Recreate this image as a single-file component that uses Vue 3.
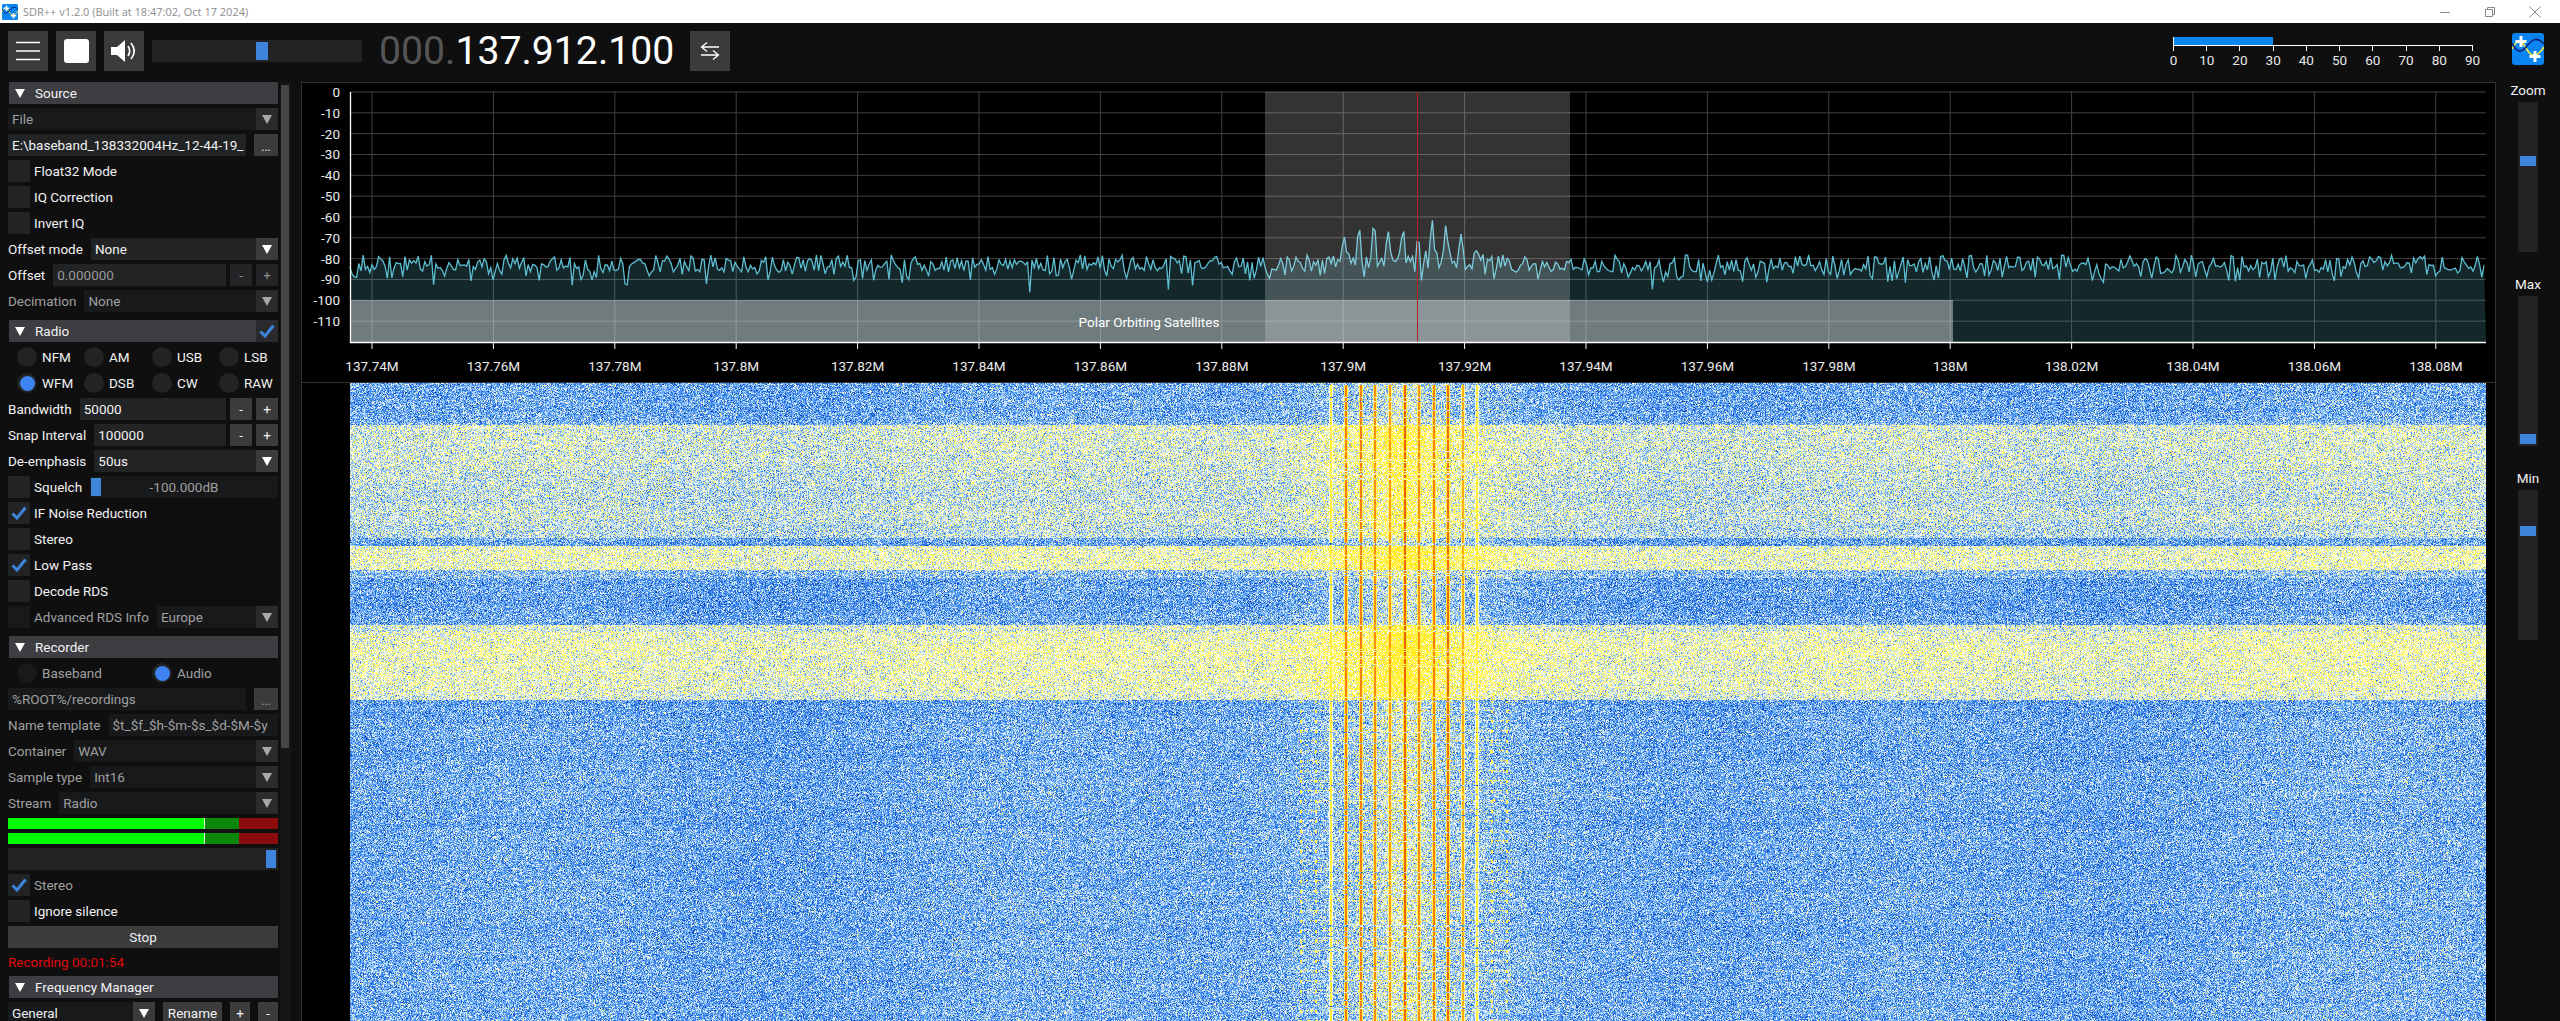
<script setup>
import { ref, onMounted } from 'vue';

const waterfall = ref(null);

function rng(seed) {
  let s = seed;
  return () => {
    s = (s * 1664525 + 1013904223) >>> 0;
    return s / 4294967296;
  };
}

// FFT grid, page coordinates
const dbLines = Array.from({ length: 12 }, (_, i) => ({ y: 92 + i * 20.83, label: i ? '-' + i * 10 : '0' }));
const freqLabels = ['137.74M', '137.76M', '137.78M', '137.8M', '137.82M', '137.84M', '137.86M', '137.88M', '137.9M',
  '137.92M', '137.94M', '137.96M', '137.98M', '138M', '138.02M', '138.04M', '138.06M', '138.08M'];
const freqLines = freqLabels.map((label, i) => ({ x: 372 + i * 121.4, label }));

const peaks = [[1344, 234], [1359, 221], [1374, 215], [1388, 228], [1403, 223], [1418, 235], [1432, 215], [1446, 221], [1461, 234], [1476, 250]];

function buildTrace() {
  const r = rng(77);
  const pts = [];
  for (let x = 350; x <= 2486; x += 2.2) {
    let y = 255 + r() * 17;
    if (r() < 0.35) y += r() * 14;
    if (r() < 0.04) y += r() * 18;
    y -= 5 * Math.exp(-((x - 1410) ** 2) / 5000);
    for (const [px, py] of peaks) {
      const d = Math.abs(x - px);
      if (d < 3) y = Math.min(y, py + d * (255 - py) / 3);
    }
    pts.push(x.toFixed(1) + ' ' + y.toFixed(1));
  }
  return pts;
}
const tracePts = buildTrace();
const tracePath = 'M' + tracePts.join('L');
const fillPath = 'M350 342L' + tracePts.join('L') + 'L2486 342Z';

const bands = [
  [383, 412, 0.36], [412, 425, 0.39], [425, 470, 0.54], [470, 525, 0.51], [525, 538, 0.5], [538, 546, 0.36],
  [546, 570, 0.6], [570, 578, 0.43], [578, 625, 0.35], [625, 632, 0.56], [632, 690, 0.6], [690, 700, 0.56], [700, 1022, 0.37]
];

const stops = [
  [0, 0, 50, 160], [0.2, 36, 106, 224], [0.36, 96, 166, 244], [0.5, 196, 226, 252], [0.57, 255, 255, 255],
  [0.66, 255, 255, 150], [0.78, 255, 232, 20], [0.88, 255, 160, 10], [1, 232, 70, 0]
];

function colorAt(l) {
  if (l <= 0) return stops[0];
  for (let i = 1; i < stops.length; i++) {
    if (l <= stops[i][0]) {
      const a = stops[i - 1];
      const b = stops[i];
      const t = (l - a[0]) / (b[0] - a[0]);
      return [0, a[1] + (b[1] - a[1]) * t, a[2] + (b[2] - a[2]) * t, a[3] + (b[3] - a[3]) * t];
    }
  }
  return stops[stops.length - 1];
}

// page x of each carrier line with the level it reaches
const carriers = [
  [1330, 0.72], [1345, 0.9], [1360, 0.9], [1374, 0.88], [1389, 0.86], [1404, 0.94],
  [1418, 0.88], [1433, 0.9], [1447, 0.92], [1462, 0.84], [1476, 0.72]
];
const dotted = [1300, 1315, 1491, 1506];

function drawWaterfall(canvas) {
  const w = canvas.width;
  const h = canvas.height;
  const ctx = canvas.getContext('2d');
  const img = ctx.createImageData(w, h);
  const r = rng(4242);
  const gauss = () => (r() + r() + r() - 1.5) * 0.22;

  const lineLevel = new Float32Array(w);
  const lineEdge = new Float32Array(w);
  const dotCol = new Uint8Array(w);
  const glow = new Float32Array(w);
  const core = new Float32Array(w);
  const drift = new Float32Array(w);
  for (let x = 0; x < w; x++) {
    const px = x + 350;
    glow[x] = 0.09 * Math.exp(-((px - 1400) ** 2) / (2 * 60 * 60));
    core[x] = 0.07 * Math.exp(-((px - 1403) ** 2) / (2 * 16 * 16));
    drift[x] = 0.012 * Math.sin(px / 71) + 0.012 * Math.sin(px / 193 + 1);
    for (const [cx, lvl] of carriers) {
      if (px === cx || px === cx + 1) lineLevel[x] = lvl;
      if (px === cx - 1 || px === cx + 2) lineEdge[x] = lvl - 0.17;
    }
    if (dotted.includes(px) || dotted.includes(px - 1)) dotCol[x] = 1;
  }

  let b = 0;
  let walk = 0;
  for (let y = 0; y < h; y++) {
    const py = y + 383;
    while (py >= bands[b][1]) b++;
    const base = bands[b][2];
    const lower = py > 700;
    walk = walk * 0.8 + (r() - 0.5) * 0.02;
    const rowOn = r() > 0.12;
    const gridRow = lower && py % 10 < 1;
    for (let x = 0; x < w; x++) {
      const px = x + 350;
      let l = base + walk + drift[x] + gauss();
      const s = r();
      if (s < 0.11) l += 0.15;
      else if (s < 0.19) l -= 0.16;
      l = Math.min(Math.min(l, 0.7) + glow[x] + core[x], 0.77);
      if (gridRow && px > 1300 && px < 1510 && r() > 0.45) l += 0.18;
      if (lineLevel[x] && rowOn) l = Math.max(l, lineLevel[x] + r() * 0.05);
      else if (lineEdge[x] && rowOn) l = Math.max(l, lineEdge[x]);
      if (dotCol[x] && lower && py % 10 < 3) l = Math.max(l, 0.72);
      const c = colorAt(l);
      const i = (y * w + x) * 4;
      img.data[i] = c[1];
      img.data[i + 1] = c[2];
      img.data[i + 2] = c[3];
      img.data[i + 3] = 255;
    }
  }
  ctx.putImageData(img, 0, 0);
}

onMounted(() => {
  drawWaterfall(waterfall.value);
});

const modes = ['NFM', 'AM', 'USB', 'LSB', 'WFM', 'DSB', 'CW', 'RAW'];
const meterTicks = [0, 10, 20, 30, 40, 50, 60, 70, 80, 90];
const sideSliders = [
  { label: 'Zoom', handle: 54 },
  { label: 'Max', handle: 138 },
  { label: 'Min', handle: 36 }
];
</script>

<template>
  <div class="app">
    <div class="titlebar">
      <svg class="title-icon" viewBox="0 0 32 32">
        <rect width="32" height="32" rx="3" fill="#0a84f0" />
        <path d="M0 16 C5 6 9 6 14 15 S24 26 32 14" fill="none" stroke="#f2e93a" stroke-width="2" />
        <path d="M0 10 C5 20 9 20 14 14 S24 2 32 11" fill="none" stroke="#10207a" stroke-width="2" />
        <path d="M9 3v11M3.500 8.500h11M23 18v11M17.500 23.500h11" stroke="#fff" stroke-width="3" />
      </svg>
      <span class="title-text">SDR++ v1.2.0 (Built at 18:47:02, Oct 17 2024)</span>
      <div class="win-btns">
        <svg width="12" height="12" viewBox="0 0 12 12"><path d="M1 6.500h10" stroke="#8a8a8a" /></svg>
        <svg width="12" height="12" viewBox="0 0 12 12"><path d="M1.500 3.500h7v7h-7zM3.500 3.500v-2h7v7h-2" fill="none" stroke="#8a8a8a" /></svg>
        <svg width="12" height="12" viewBox="0 0 12 12"><path d="M.5 .5l11 11M11.500 .5l-11 11" stroke="#8a8a8a" /></svg>
      </div>
    </div>

    <div class="topbar">
      <div class="top-btn">
        <svg width="24" height="20" viewBox="0 0 24 20"><path d="M0 1.500h24M0 10h24M0 18.500h24" stroke="#fff" stroke-width="1.600" /></svg>
      </div>
      <div class="top-btn">
        <div class="stop-square"></div>
      </div>
      <div class="top-btn">
        <svg width="28" height="24" viewBox="0 0 28 24">
          <path d="M1 8h6l8-7v22l-8-7H1z" fill="#fff" />
          <path d="M18 7c2 3 2 7 0 10M21 4c4 5 4 11 0 16" fill="none" stroke="#fff" stroke-width="1.700" />
        </svg>
      </div>
      <div class="vol-slider"><div class="vol-handle"></div></div>
      <div class="freq"><span class="freq-dim">000.</span>137.912.100</div>
      <div class="top-btn swap">
        <svg width="20" height="18" viewBox="0 0 20 18">
          <path d="M19 5H2M7 .5 1.500 5 7 9.500M1 13h17M13 8.500l5.500 4.500L13 17.500" fill="none" stroke="#fff" stroke-width="1.300" />
        </svg>
      </div>
      <div class="spacer"></div>
      <div class="snr">
        <div class="snr-bar"></div>
        <div class="snr-axis">
          <div v-for="t in meterTicks" :key="t" class="snr-tick"><span>{{ t }}</span></div>
        </div>
      </div>
      <svg class="logo" viewBox="0 0 32 32">
        <rect width="32" height="32" rx="3" fill="#0a84f0" />
        <path d="M0 16 C5 6 9 6 14 15 S24 26 32 14" fill="none" stroke="#f2e93a" stroke-width="1.600" />
        <path d="M0 10 C5 20 9 20 14 14 S24 2 32 11" fill="none" stroke="#10207a" stroke-width="1.600" />
        <path d="M9 3v11M3.500 8.500h11M23 18v11M17.500 23.500h11" stroke="#fff" stroke-width="3" />
      </svg>
    </div>

    <div class="main">
      <div class="sidebar">
        <div class="menu">
          <div class="head"><i class="tri white"></i>Source</div>
          <div class="row"><div class="combo dim"><span>File</span><i class="arrow-box"><i class="tri"></i></i></div></div>
          <div class="row gap8"><div class="input clip">E:\baseband_138332004Hz_12-44-19_</div><div class="btn w24 small">...</div></div>
          <div class="row"><i class="check"></i><span>Float32 Mode</span></div>
          <div class="row"><i class="check"></i><span>IQ Correction</span></div>
          <div class="row"><i class="check"></i><span>Invert IQ</span></div>
          <div class="row"><span class="lbl">Offset mode</span><div class="combo"><span>None</span><i class="arrow-box lit"><i class="tri white"></i></i></div></div>
          <div class="row"><span class="lbl">Offset</span><div class="input dim-text">0.000000</div><div class="btn dark">-</div><div class="btn dark">+</div></div>
          <div class="row"><span class="lbl grey">Decimation</span><div class="combo dim"><span>None</span><i class="arrow-box"><i class="tri"></i></i></div></div>

          <div class="head mt4">
            <i class="tri white"></i>Radio
            <span class="head-check">
              <svg width="16" height="14" viewBox="0 0 16 14"><path d="M1.500 7.500 6 12 14.500 1.500" fill="none" stroke="#3d84db" stroke-width="3" /></svg>
            </span>
          </div>
          <div class="modes">
            <div v-for="(m, i) in modes" :key="m" class="mode">
              <i class="radio" :class="{ on: i === 4 }"></i>{{ m }}
            </div>
          </div>
          <div class="row"><span class="lbl">Bandwidth</span><div class="input">50000</div><div class="btn">-</div><div class="btn">+</div></div>
          <div class="row"><span class="lbl">Snap Interval</span><div class="input">100000</div><div class="btn">-</div><div class="btn">+</div></div>
          <div class="row"><span class="lbl">De-emphasis</span><div class="combo"><span>50us</span><i class="arrow-box lit"><i class="tri white"></i></i></div></div>
          <div class="row">
            <i class="check"></i><span class="lbl">Squelch</span>
            <div class="squelch"><i class="squelch-handle"></i><span>-100.000dB</span></div>
          </div>
          <div class="row"><i class="check"><svg width="16" height="14" viewBox="0 0 16 14"><path d="M1.500 7.500 6 12 14.500 1.500" fill="none" stroke="#3d84db" stroke-width="3" /></svg></i><span>IF Noise Reduction</span></div>
          <div class="row"><i class="check"></i><span>Stereo</span></div>
          <div class="row"><i class="check"><svg width="16" height="14" viewBox="0 0 16 14"><path d="M1.500 7.500 6 12 14.500 1.500" fill="none" stroke="#3d84db" stroke-width="3" /></svg></i><span>Low Pass</span></div>
          <div class="row"><i class="check"></i><span>Decode RDS</span></div>
          <div class="row"><i class="check faded"></i><span class="lbl grey">Advanced RDS Info</span><div class="combo dim"><span>Europe</span><i class="arrow-box"><i class="tri"></i></i></div></div>

          <div class="head mt4"><i class="tri white"></i>Recorder</div>
          <div class="rec-mode">
            <div class="mode faded-text"><i class="radio faded"></i>Baseband</div>
            <div class="mode faded-text"><i class="radio on"></i>Audio</div>
          </div>
          <div class="row gap8"><div class="input faded-frame grey">%ROOT%/recordings</div><div class="btn w24 small faded-frame grey">...</div></div>
          <div class="row"><span class="lbl grey">Name template</span><div class="input faded-frame grey">$t_$f_$h-$m-$s_$d-$M-$y</div></div>
          <div class="row"><span class="lbl grey">Container</span><div class="combo dim"><span>WAV</span><i class="arrow-box"><i class="tri"></i></i></div></div>
          <div class="row"><span class="lbl grey">Sample type</span><div class="combo dim"><span>Int16</span><i class="arrow-box"><i class="tri"></i></i></div></div>
          <div class="row"><span class="lbl grey">Stream</span><div class="combo dim"><span>Radio</span><i class="arrow-box"><i class="tri"></i></i></div></div>
          <div class="meter"><i class="m-on"></i><i class="m-green"></i><i class="m-red"></i></div>
          <div class="meter"><i class="m-on"></i><i class="m-green"></i><i class="m-red"></i></div>
          <div class="row"><div class="vol-wide"><i></i></div></div>
          <div class="row"><i class="check"><svg width="16" height="14" viewBox="0 0 16 14"><path d="M1.500 7.500 6 12 14.500 1.500" fill="none" stroke="#3d84db" stroke-width="3" /></svg></i><span class="grey">Stereo</span></div>
          <div class="row"><i class="check"></i><span>Ignore silence</span></div>
          <div class="row"><div class="btn full">Stop</div></div>
          <div class="row rec-time">Recording 00:01:54</div>

          <div class="head"><i class="tri white"></i>Frequency Manager</div>
          <div class="row fm">
            <div class="combo fm-combo"><span>General</span><i class="arrow-box lit"><i class="tri white"></i></i></div>
            <div class="btn rename">Rename</div>
            <div class="btn w20">+</div>
            <div class="btn w20">-</div>
          </div>
        </div>
        <div class="scroll"><div class="thumb"></div></div>
      </div>

      <div class="center">
        <svg class="fft" viewBox="302 83 2193 299" width="2193" height="299">
          <g stroke="#424242" stroke-width="1">
            <path v-for="l in dbLines" :key="l.label" :d="`M350 ${l.y}H2486`" />
            <path v-for="f in freqLines" :key="f.label" :d="`M${f.x} 92V342`" />
          </g>
          <path :d="fillPath" fill="rgba(100,200,220,0.2)" />
          <path :d="tracePath" fill="none" stroke="#5dbed2" stroke-width="1.300" />
          <rect x="350" y="300" width="1603" height="42" fill="rgba(255,255,255,0.39)" />
          <rect x="1265" y="92" width="305" height="250" fill="rgba(255,255,255,0.2)" />
          <path d="M1417.500 92V342" stroke="#b3201f" stroke-width="1" />
          <text x="1149" y="327" class="band-text" text-anchor="middle">Polar Orbiting Satellites</text>
          <path d="M350.500 92V342.500H2486" fill="none" stroke="#fff" stroke-width="1.300" />
          <path v-for="f in freqLines" :key="'t' + f.label" :d="`M${f.x} 343V349`" stroke="#fff" stroke-width="1" />
          <text v-for="l in dbLines" :key="'y' + l.label" x="340" :y="l.y + 5" class="axis-text" text-anchor="end">{{ l.label }}</text>
          <text v-for="f in freqLines" :key="'x' + f.label" :x="f.x" y="371" class="axis-text" text-anchor="middle">{{ f.label }}</text>
        </svg>
        <div class="wf-wrap">
          <canvas ref="waterfall" class="wf" width="2136" height="638"></canvas>
        </div>
      </div>

      <div class="rightbar">
        <div v-for="s in sideSliders" :key="s.label" class="side-group">
          <div class="side-label">{{ s.label }}</div>
          <div class="v-slider">
            <i class="v-handle" :style="{ marginTop: s.handle + 'px' }"></i>
          </div>
        </div>
      </div>
    </div>
  </div>
</template>

<style>
html, body {
  margin: 0;
  overflow: hidden;
  background: #0f0f10;
}
</style>

<style scoped>
.app {
  width: 2560px;
  height: 1021px;
  overflow: hidden;
  display: flex;
  flex-direction: column;
  background: #0f0f10;
  color: #f2f2f2;
  font-family: Roboto, "Liberation Sans", sans-serif;
  font-size: 13.5px;
}

/* window chrome */
.titlebar {
  height: 23px;
  background: #fff;
  display: flex;
  align-items: center;
  padding-left: 2px;
  flex: none;
}
.title-icon {
  width: 16px;
  height: 16px;
}
.title-text {
  margin-left: 5px;
  font-family: "Open Sans", sans-serif;
  font-size: 11px;
  color: #8c8c8c;
}
.win-btns {
  margin-left: auto;
  display: flex;
  gap: 33px;
  padding-right: 19px;
}

/* top bar */
.topbar {
  height: 59px;
  padding: 8px 16px 11px 8px;
  box-sizing: border-box;
  display: flex;
  align-items: flex-start;
  flex: none;
}
.top-btn {
  width: 40px;
  height: 40px;
  background: #3b3b3c;
  margin-right: 8px;
  display: flex;
  align-items: center;
  justify-content: center;
}
.stop-square {
  width: 25px;
  height: 24px;
  background: #fff;
  border-radius: 3px;
}
.vol-slider {
  width: 210px;
  height: 22px;
  margin-top: 9px;
  background: #212325;
  padding: 2px 0 2px 104px;
  box-sizing: border-box;
}
.vol-handle {
  width: 12px;
  height: 18px;
  background: #3d84db;
}
.freq {
  margin-left: 17px;
  width: 311px;
  font-size: 39.2px;
  line-height: 40px;
  color: #fff;
  white-space: nowrap;
}
.freq-dim {
  color: #555;
}
.swap {
  margin: 0;
}
.spacer {
  flex: 1;
}
.snr {
  width: 300px;
  margin-top: 6px;
  margin-right: 39px;
  position: relative;
}
.snr-bar {
  width: 100px;
  height: 8px;
  background: #0a84f0;
  border-left: 1px solid #fff;
  box-sizing: border-box;
}
.snr-axis {
  height: 5px;
  border-top: 1px solid #fff;
  display: flex;
  justify-content: space-between;
}
.snr-tick {
  width: 1px;
  height: 5px;
  background: #fff;
  position: relative;
}
.snr-tick span {
  position: absolute;
  top: 6px;
  left: -10px;
  width: 21px;
  text-align: center;
  color: #e8e8e8;
}
.logo {
  width: 32px;
  height: 32px;
  margin-top: 2px;
}

/* main area */
.main {
  flex: 1;
  display: flex;
  min-height: 0;
}
.sidebar {
  width: 301px;
  flex: none;
  display: flex;
  overflow: hidden;
}
.menu {
  width: 270px;
  margin-left: 8px;
  display: flex;
  flex-direction: column;
  gap: 4px;
  flex: none;
}
.head {
  height: 22px;
  margin-left: 1px;
  flex: none;
  background: #3d3d42;
  display: flex;
  align-items: center;
  padding-left: 6px;
  position: relative;
}
.head .tri {
  margin-right: 10px;
}
.mt4 {
  margin-top: 4px;
}
.head-check {
  position: absolute;
  right: 0;
  top: 0;
  width: 22px;
  height: 22px;
  background: #2a2a2e;
  display: flex;
  align-items: center;
  justify-content: center;
}
.row {
  height: 22px;
  flex: none;
  display: flex;
  align-items: center;
  gap: 4px;
  white-space: nowrap;
}
.gap8 {
  gap: 8px;
}
.lbl {
  margin-right: 4px;
  flex: none;
}
.grey {
  color: #a0a0a0;
}
.input {
  flex: 1;
  height: 22px;
  background: #212325;
  line-height: 22px;
  padding-left: 4px;
  box-sizing: border-box;
  overflow: hidden;
  min-width: 0;
}
.clip {
  white-space: nowrap;
}
.dim-text {
  color: #9a9a9a;
}
.faded-frame {
  background: #18191b;
}
.combo {
  flex: 1;
  height: 22px;
  background: #212325;
  display: flex;
  align-items: center;
  justify-content: space-between;
  padding-left: 4px;
  box-sizing: border-box;
  min-width: 0;
}
.combo.dim {
  background: #18191b;
  color: #a0a0a0;
}
.arrow-box {
  width: 22px;
  height: 22px;
  display: flex;
  align-items: center;
  justify-content: center;
  background: #2a2b2d;
}
.arrow-box.lit {
  background: #3b3b3c;
}
.tri {
  display: block;
  width: 0;
  height: 0;
  border-left: 5.500px solid transparent;
  border-right: 5.500px solid transparent;
  border-top: 9px solid #a8a8a8;
}
.tri.white {
  border-top-color: #fff;
}
.btn {
  width: 22px;
  height: 22px;
  flex: none;
  background: #3b3b3c;
  display: flex;
  align-items: center;
  justify-content: center;
}
.btn.dark {
  background: #232425;
  color: #8c8c8c;
}
.btn.w24 {
  width: 24px;
}
.btn.w20 {
  width: 20px;
}
.btn.small {
  font-size: 12px;
  padding-top: 3px;
  box-sizing: border-box;
}
.btn.full {
  width: 100%;
}
.check {
  width: 22px;
  height: 22px;
  flex: none;
  background: #212325;
  display: flex;
  align-items: center;
  justify-content: center;
}
.check.faded {
  background: #18191b;
}
.modes {
  display: grid;
  grid-template-columns: 67px 68px 67px 68px;
  grid-auto-rows: 26px;
  margin: -2px 0 -2px 8px;
  flex: none;
  height: 52px;
}
.mode {
  display: flex;
  align-items: center;
  gap: 5px;
}
.radio {
  width: 20px;
  height: 20px;
  border-radius: 50%;
  background: #212325;
  flex: none;
  position: relative;
  margin-left: 1px;
}
.radio.faded {
  background: #18191b;
}
.radio.on::after {
  content: "";
  position: absolute;
  inset: 2.500px;
  border-radius: 50%;
  background: #3d84f0;
}
.faded-text {
  color: #a0a0a0;
}
.rec-mode {
  display: grid;
  grid-template-columns: 135px 1fr;
  margin-left: 8px;
  height: 22px;
  flex: none;
  align-items: center;
}
.squelch {
  flex: 1;
  height: 22px;
  background: #18191b;
  position: relative;
  display: flex;
  align-items: center;
  justify-content: center;
  color: #a0a0a0;
}
.squelch-handle {
  position: absolute;
  left: 1px;
  top: 2px;
  width: 10px;
  height: 18px;
  background: #3d84db;
}
.meter {
  height: 11px;
  display: flex;
  flex: none;
}
.m-on {
  width: 196px;
  background: #00ff00;
  border-right: 1px solid #d8ffd8;
}
.m-green {
  width: 34px;
  background: #0b870b;
}
.m-red {
  flex: 1;
  background: #8b0c0c;
}
.vol-wide {
  flex: 1;
  height: 22px;
  background: #212325;
  padding: 2px 2px 2px 0;
  box-sizing: border-box;
  display: flex;
  justify-content: flex-end;
}
.vol-wide i {
  width: 10px;
  background: #3d84db;
}
.rec-time {
  color: #e0060a;
  height: 20px;
}
.fm {
  gap: 8px;
}
.fm-combo {
  flex: none;
  width: 147px;
  background: #18191b;
}
.rename {
  width: 59px;
}
.scroll {
  width: 11px;
  margin-left: 2px;
  background: #151516;
  flex: none;
  height: 100%;
  padding: 3px 1px 0 1px;
  box-sizing: border-box;
}
.thumb {
  width: 8px;
  height: 663px;
  background: #454545;
}

/* spectrum */
.center {
  width: 2195px;
  flex: none;
  box-sizing: border-box;
  border-left: 1px solid #333;
  border-right: 1px solid #333;
  display: flex;
  flex-direction: column;
  background: #000;
}
.fft {
  display: block;
  flex: none;
  border-top: 1px solid #333;
  border-bottom: 1px solid #333;
}
.axis-text {
  font-size: 13.5px;
  fill: #ececec;
}
.band-text {
  font-size: 13.5px;
  fill: #fff;
}
.wf-wrap {
  flex: 1;
  padding-left: 48px;
  min-height: 0;
}
.wf {
  display: block;
}

/* right sliders */
.rightbar {
  flex: 1;
  display: flex;
  flex-direction: column;
  align-items: center;
}
.side-group {
  height: 194px;
  display: flex;
  flex-direction: column;
  align-items: center;
  flex: none;
}
.side-label {
  height: 16px;
  line-height: 16px;
  margin-bottom: 4px;
}
.v-slider {
  width: 20px;
  height: 150px;
  background: #212325;
  border-radius: 2px;
}
.v-handle {
  display: block;
  width: 16px;
  height: 10px;
  margin-left: 2px;
  background: #3d84db;
}
</style>
